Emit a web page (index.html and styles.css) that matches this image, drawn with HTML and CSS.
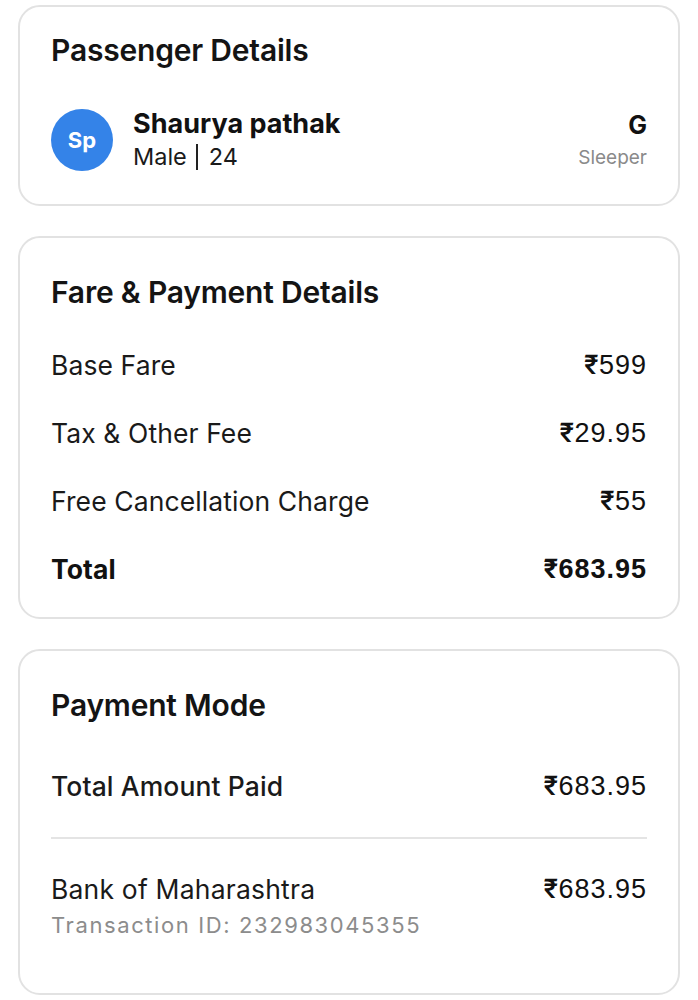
FILE: index.html
```html
<!DOCTYPE html>
<html lang="en">
<head>
<meta charset="utf-8">
<title>Booking Details</title>
<link rel="stylesheet" href="styles.css">
</head>
<body>
<main class="page">
  <section class="card card-passenger">
    <h2 class="card-title">Passenger Details</h2>
    <div class="passenger">
      <div class="avatar">Sp</div>
      <div class="passenger-info">
        <div class="passenger-name">Shaurya pathak</div>
        <div class="passenger-meta"><span>Male</span><span class="sep"></span><span>24</span></div>
      </div>
      <div class="berth">
        <div class="berth-code">G</div>
        <div class="berth-type">Sleeper</div>
      </div>
    </div>
  </section>

  <section class="card card-fare">
    <h2 class="card-title">Fare &amp; Payment Details</h2>
    <div class="rows">
      <div class="row"><span>Base Fare</span><span class="amt"><span class="cur">₹</span>599</span></div>
      <div class="row"><span>Tax &amp; Other Fee</span><span class="amt"><span class="cur">₹</span>29.95</span></div>
      <div class="row"><span>Free Cancellation Charge</span><span class="amt"><span class="cur">₹</span>55</span></div>
      <div class="row row-total"><span>Total</span><span class="amt"><span class="cur">₹</span>683.95</span></div>
    </div>
  </section>

  <section class="card card-mode">
    <h2 class="card-title">Payment Mode</h2>
    <div class="row row-paid"><span>Total Amount Paid</span><span class="amt"><span class="cur">₹</span>683.95</span></div>
    <hr class="divider">
    <div class="bank">
      <div class="bank-info">
        <div class="bank-name">Bank of Maharashtra</div>
        <div class="txn">Transaction ID: 232983045355</div>
      </div>
      <div class="amt bank-amt"><span class="cur">₹</span>683.95</div>
    </div>
  </section>
</main>
</body>
</html>
```

FILE: styles.css
```css
* { box-sizing: border-box; }
html, body { margin: 0; padding: 0; background: #ffffff; }
body {
  font-family: Inter, "Noto Sans", "Liberation Sans", sans-serif;
  color: #141414;
}
.page {
  padding: 5px 18px 0 18px;
  display: flex;
  flex-direction: column;
  gap: 30px;
}
.card {
  border: 2px solid #e2e2e2;
  border-radius: 22px;
  padding: 26px 31px 33px 31px;
  background: #fff;
}
.card-title {
  margin: 0;
  font-size: 30px;
  line-height: 34px;
  font-weight: 600;
  letter-spacing: -0.2px;
  color: #141414;
}
.passenger {
  margin-top: 42px;
  display: flex;
  align-items: center;
  gap: 20px;
}
.avatar {
  width: 62px;
  height: 62px;
  border-radius: 50%;
  background: #3483e8;
  color: #fff;
  font-weight: 700;
  font-size: 22px;
  display: flex;
  align-items: center;
  justify-content: center;
  flex: none;
}
.passenger-info { flex: 1; display: flex; flex-direction: column; gap: 4px; }
.passenger-name { font-size: 27px; line-height: 30px; font-weight: 700; color: #111; }
.passenger-meta { font-size: 23.5px; line-height: 28px; display: flex; align-items: center; color: #1a1a1a; }
.sep {
  display: inline-block;
  width: 2px;
  height: 26px;
  background: #222;
  margin: 0 11px 0 9px;
}
.berth { text-align: right; display: flex; flex-direction: column; gap: 8px; }
.berth-code { font-size: 25px; line-height: 28px; font-weight: 700; color: #111; }
.berth-type { font-size: 19px; line-height: 22px; color: #8a8a8a; }

.card-fare { padding-top: 37px; padding-bottom: 33px; }
.rows {
  margin-top: 41px;
  display: flex;
  flex-direction: column;
  gap: 38px;
}
.row {
  display: flex;
  justify-content: space-between;
  align-items: center;
  font-size: 26.5px;
  line-height: 30px;
  color: #1a1a1a;
  letter-spacing: 0.1px;
}
.row-total { font-weight: 700; color: #111; }
.amt {
  font-family: "Liberation Sans", Arial, "Noto Sans", sans-serif;
  font-size: 27px;
  font-weight: 400;
  letter-spacing: 1px;
  color: #111;
}
.cur {
  font-family: Roboto, "Noto Sans", sans-serif;
  font-weight: 500;
  letter-spacing: 0.5px;
}
.row-total .amt { font-weight: 700; }
.row-total .cur { font-weight: 700; }

.card-mode { padding-top: 37px; padding-bottom: 54px; }
.row-paid { margin-top: 49px; font-weight: 500; }
.row-paid .amt { font-weight: 400; }
.divider {
  border: 0;
  height: 2px;
  background: #e4e4e4;
  margin: 36px 0 35px 0;
}
.bank { display: flex; justify-content: space-between; align-items: flex-start; }
.bank-name { font-size: 26.5px; line-height: 30px; color: #1a1a1a; letter-spacing: 0.2px; }
.txn { font-size: 22px; line-height: 28px; color: #8c8c8c; letter-spacing: 1.6px; margin-top: 7px; }
.bank-amt { line-height: 30px; }
```
